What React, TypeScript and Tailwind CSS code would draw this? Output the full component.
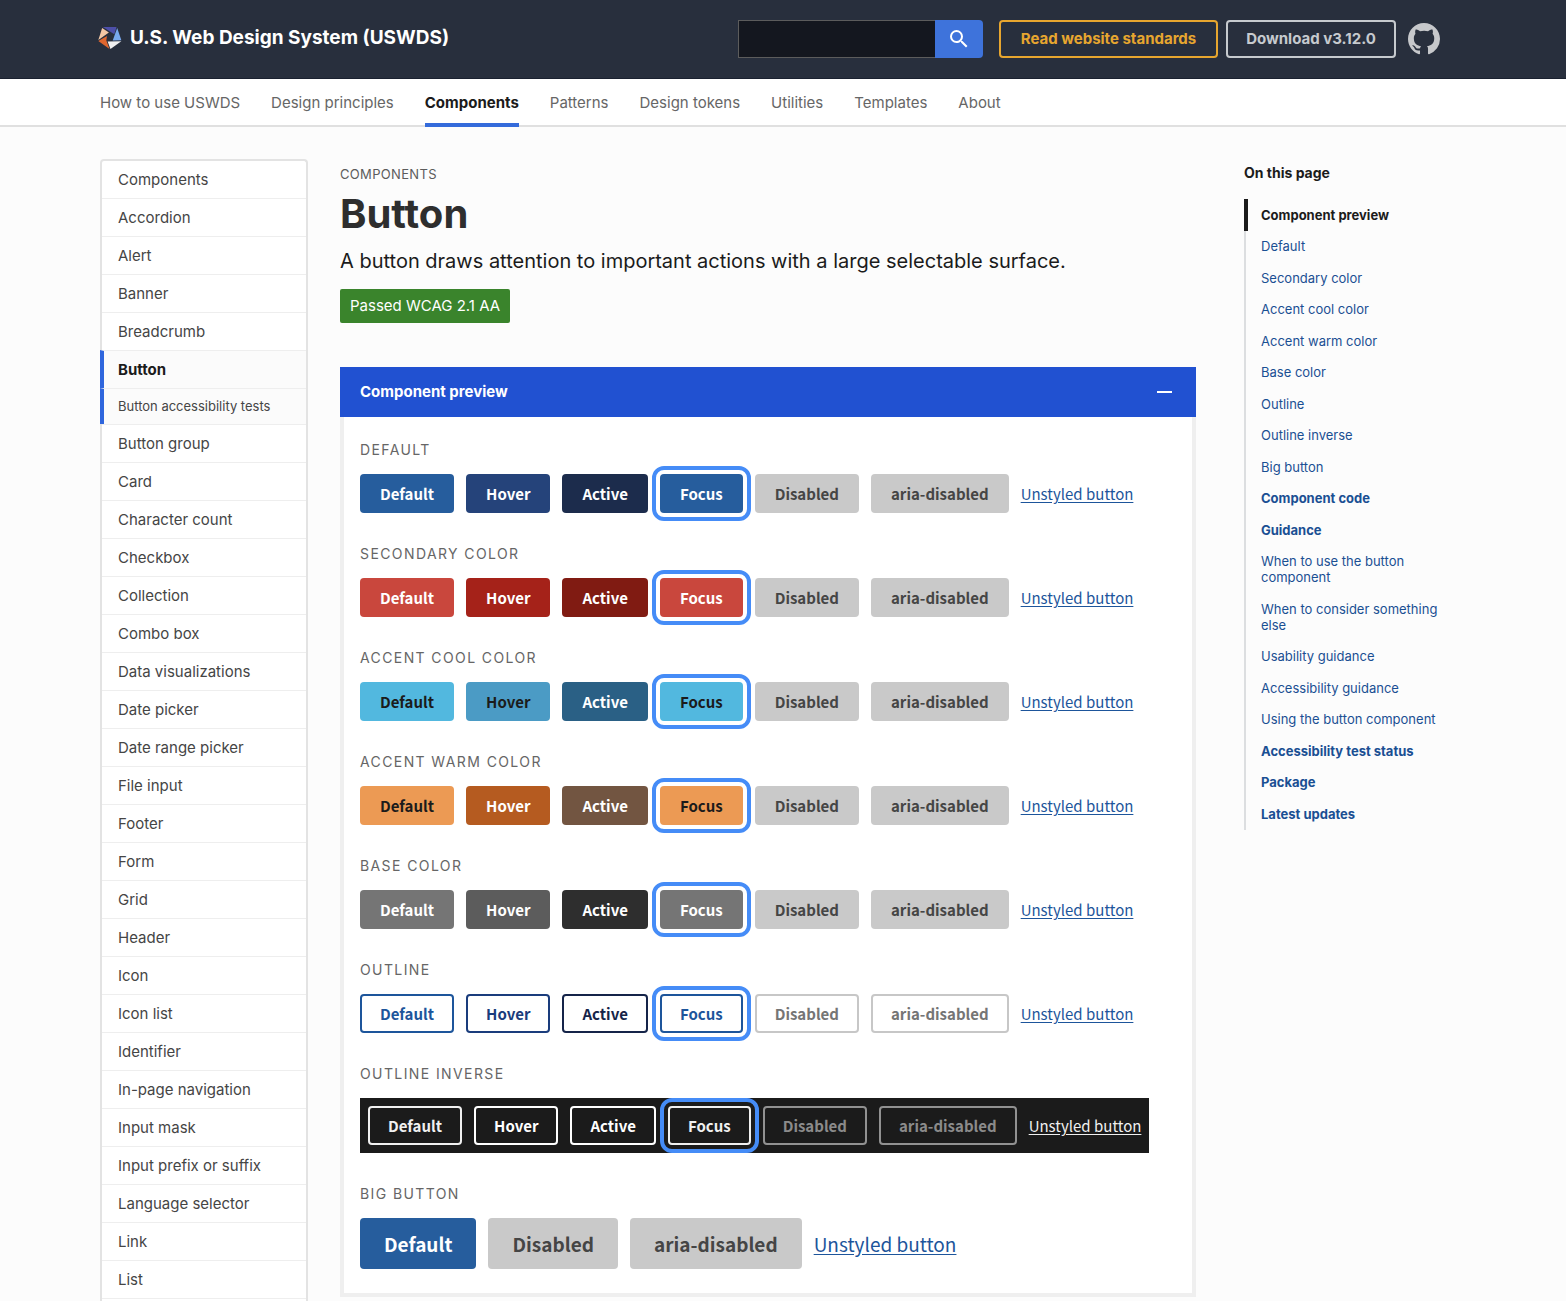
import { MdSearch } from "react-icons/md";

const navItems = [
  "How to use USWDS",
  "Design principles",
  "Components",
  "Patterns",
  "Design tokens",
  "Utilities",
  "Templates",
  "About",
];

const sideItems = [
  "Components",
  "Accordion",
  "Alert",
  "Banner",
  "Breadcrumb",
  "Button",
  "Button accessibility tests",
  "Button group",
  "Card",
  "Character count",
  "Checkbox",
  "Collection",
  "Combo box",
  "Data visualizations",
  "Date picker",
  "Date range picker",
  "File input",
  "Footer",
  "Form",
  "Grid",
  "Header",
  "Icon",
  "Icon list",
  "Identifier",
  "In-page navigation",
  "Input mask",
  "Input prefix or suffix",
  "Language selector",
  "Link",
  "List",
];

const tocItems: { text: string; bold?: boolean }[] = [
  { text: "Default" },
  { text: "Secondary color" },
  { text: "Accent cool color" },
  { text: "Accent warm color" },
  { text: "Base color" },
  { text: "Outline" },
  { text: "Outline inverse" },
  { text: "Big button" },
  { text: "Component code", bold: true },
  { text: "Guidance", bold: true },
  { text: "When to use the button component" },
  { text: "When to consider something else" },
  { text: "Usability guidance" },
  { text: "Accessibility guidance" },
  { text: "Using the button component" },
  { text: "Accessibility test status", bold: true },
  { text: "Package", bold: true },
  { text: "Latest updates", bold: true },
];

const GRAY = "bg-[#c9c9c9] text-[#454545]";

const variants: { label: string; styles: string[]; inverse?: boolean }[] = [
  {
    label: "Default",
    styles: ["bg-[#265d9d] text-white", "bg-[#25437a] text-white", "bg-[#1c2c4c] text-white", "bg-[#265d9d] text-white", GRAY, GRAY],
  },
  {
    label: "Secondary color",
    styles: ["bg-[#c9473d] text-white", "bg-[#a52219] text-white", "bg-[#801b12] text-white", "bg-[#c9473d] text-white", GRAY, GRAY],
  },
  {
    label: "Accent cool color",
    styles: ["bg-[#52b8df] text-[#1b1b1b]", "bg-[#4b9bc5] text-[#1b1b1b]", "bg-[#2a6085] text-white", "bg-[#52b8df] text-[#1b1b1b]", GRAY, GRAY],
  },
  {
    label: "Accent warm color",
    styles: ["bg-[#ec9a54] text-[#1b1b1b]", "bg-[#b55b20] text-white", "bg-[#725541] text-white", "bg-[#ec9a54] text-[#1b1b1b]", GRAY, GRAY],
  },
  {
    label: "Base color",
    styles: ["bg-[#757575] text-white", "bg-[#5c5c5c] text-white", "bg-[#2e2e2e] text-white", "bg-[#757575] text-white", GRAY, GRAY],
  },
  {
    label: "Outline",
    styles: [
      "border-2 border-[#1d559b] text-[#1d559b]",
      "border-2 border-[#1a3c7c] text-[#1a3c7c]",
      "border-2 border-[#152449] text-[#152449]",
      "border-2 border-[#1d559b] text-[#1d559b]",
      "border-2 border-[#c7c7c7] text-[#757575]",
      "border-2 border-[#c7c7c7] text-[#757575]",
    ],
  },
  {
    label: "Outline inverse",
    inverse: true,
    styles: [
      "border-2 border-[#f0f0f0] text-[#f0f0f0]",
      "border-2 border-white text-white",
      "border-2 border-white text-white",
      "border-2 border-[#f0f0f0] text-[#f0f0f0]",
      "border-2 border-[#919191] text-[#8b8b8b]",
      "border-2 border-[#919191] text-[#8b8b8b]",
    ],
  },
];

const states = ["Default", "Hover", "Active", "Focus", "Disabled", "aria-disabled"];

function Logo() {
  return (
    <svg viewBox="52 76 75 70" className="h-6 w-6 shrink-0" aria-hidden="true">
      <polygon points="67,77 110,77 103,99" fill="#4d4fa8" />
      <polygon points="65,80 86,94 53,117" fill="#f3c7a5" />
      <polygon points="53,120 80,105 78,119 88,145" fill="#df662f" />
      <polygon points="82,122 125,121 91,145" fill="#f0f0f0" />
      <polygon points="112,80 125,118 98,119" fill="#78a9ef" />
    </svg>
  );
}

function GithubMark() {
  return (
    <svg viewBox="0 0 16 16" className="size-8" fill="currentColor" aria-hidden="true">
      <path d="M8 0C3.58 0 0 3.58 0 8c0 3.54 2.29 6.53 5.47 7.59.4.07.55-.17.55-.38 0-.19-.01-.82-.01-1.49-2.01.37-2.53-.49-2.69-.94-.09-.23-.48-.94-.82-1.13-.28-.15-.68-.52-.01-.53.63-.01 1.08.58 1.23.82.72 1.21 1.87.87 2.33.66.07-.52.28-.87.51-1.07-1.78-.2-3.64-.89-3.64-3.95 0-.87.31-1.59.82-2.15-.08-.2-.36-1.02.08-2.12 0 0 .67-.21 2.2.82.64-.18 1.32-.27 2-.27.68 0 1.36.09 2 .27 1.53-1.04 2.2-.82 2.2-.82.44 1.1.16 1.92.08 2.12.51.56.82 1.27.82 2.15 0 3.07-1.87 3.75-3.65 3.95.29.25.54.73.54 1.48 0 1.07-.01 1.93-.01 2.2 0 .21.15.46.55.38A8.013 8.013 0 0016 8c0-4.42-3.58-8-8-8z" />
    </svg>
  );
}

function GroupLabel({ children }: { children: string }) {
  return <h3 className="mb-3.5 text-sm leading-5 tracking-widest text-[#666666] uppercase">{children}</h3>;
}

function ButtonRow({ styles, inverse }: { styles: string[]; inverse?: boolean }) {
  return (
    <div className={`flex w-fit items-center gap-3 font-["Noto_Sans_CJK_SC",sans-serif] text-[15px] leading-4 ${inverse ? "bg-[#1b1b1b] p-2" : ""}`}>
      {states.map((state, i) => (
        <button
          key={state}
          type="button"
          disabled={state === "Disabled"}
          aria-disabled={state === "aria-disabled"}
          className={`flex h-[39px] items-center justify-center rounded-sm font-bold whitespace-nowrap ${styles[i].startsWith("border-2") ? "px-[18px]" : "px-5"} ${styles[i]} ${state === "Focus" ? "outline-4 outline-offset-4 outline-[#458cf7]" : ""}`}
        >
          {state}
        </button>
      ))}
      <button type="button" className={`whitespace-nowrap underline underline-offset-2 ${inverse ? "text-[#f0f0f0]" : "text-[#1d559b]"}`}>
        Unstyled button
      </button>
    </div>
  );
}

export default function App() {
  return (
    <div className="min-h-screen bg-[#fcfcfc] font-[Inter,sans-serif] text-[15px] text-[#1b1b1b]">
      <header>
        <div className="border-b border-[#1a2130] bg-[#282f3d] pr-[26px]">
          <div className="mx-auto flex h-[78px] max-w-[1340px] items-center justify-between">
            <a href="#home" className="-ml-0.5 flex items-center gap-2 pb-0.5 text-[19px] leading-6 font-bold whitespace-nowrap text-white">
              <Logo />
              U.S. Web Design System (USWDS)
            </a>
            <div className="flex items-center">
              <form role="search" className="mr-4 flex" onSubmit={(e) => e.preventDefault()}>
                <input
                  type="search"
                  aria-label="Search"
                  className="h-[38px] w-[197px] border border-r-0 border-[#5c5c5c] bg-[#14171f] px-2 text-white"
                />
                <button type="submit" aria-label="Search" className="flex h-[38px] w-12 items-center justify-center rounded-r-sm bg-[#3e73db] text-white">
                  <MdSearch className="size-6" />
                </button>
              </form>
              <a href="#standards" className="mr-2 flex h-[38px] w-[219px] items-center justify-center rounded-sm border-2 border-[#e7a62f] font-bold whitespace-nowrap text-[#e7a62f]">
                Read website standards
              </a>
              <a href="#download" className="mr-3 flex h-[38px] w-[170px] items-center justify-center rounded-sm border-2 border-[#c6cace] font-bold whitespace-nowrap text-[#c6cace]">
                Download v3.12.0
              </a>
              <a href="#github" aria-label="GitHub" className="text-[#c6c8cb]">
                <GithubMark />
              </a>
            </div>
          </div>
        </div>
        <nav aria-label="Primary" className="border-b-2 border-[#e0e0e0] bg-white pr-[26px]">
          <ul className="mx-auto -mb-0.5 flex max-w-[1340px] gap-[31px]">
            {navItems.map((item) => (
              <li key={item}>
                <a
                  href="#nav"
                  className={`block h-12 border-b-4 pt-3.5 leading-5 whitespace-nowrap ${item === "Components" ? "border-[#346bdb] font-bold text-[#1b1b1b]" : "border-transparent text-[#666666]"}`}
                >
                  {item}
                </a>
              </li>
            ))}
          </ul>
        </nav>
      </header>

      <div className="pr-[26px]">
        <div className="mx-auto flex max-w-[1340px] items-start pt-8">
          <nav aria-label="Secondary" className="mr-8 w-52 shrink-0">
            <ul className="rounded-t-sm border-2 border-b-0 border-[#e3e3e3] bg-white">
              {sideItems.map((item) => {
                const current = item === "Button";
                const sub = item === "Button accessibility tests";
                return (
                  <li
                    key={item}
                    className={`border-[#eeeeee] not-first:border-t ${current || sub ? "-ml-0.5 border-l-4 border-l-[#2f66dd] bg-[#fbfbfb] pl-3.5" : "pl-4"}`}
                  >
                    <a
                      href="#component"
                      className={`block ${sub ? "text-[13px] leading-[35px]" : "leading-[37px]"} ${current ? "font-bold text-[#1b1b1b]" : "text-[#454545]"}`}
                    >
                      {item}
                    </a>
                  </li>
                );
              })}
              <li aria-hidden="true" className="border-t border-[#eeeeee] pb-2" />
            </ul>
          </nav>

          <main className="min-w-0 flex-1">
            <p className="mt-[5px] text-[13px] leading-5 tracking-wide text-[#5c5c5c] uppercase">Components</p>
            <h1 className="mt-[5px] text-[40px] leading-[50px] font-bold text-[#2e2e2e]">Button</h1>
            <p className="mt-1.5 text-xl leading-8">A button draws attention to important actions with a large selectable surface.</p>
            <span className="mt-3 inline-block h-[34px] rounded-xs bg-[#3a842c] px-2.5 leading-[34px] text-white">Passed WCAG 2.1 AA</span>

            <section className="mt-11">
              <h2>
                <button type="button" aria-expanded="true" className="flex h-[50px] w-full items-center justify-between bg-[#2151d1] pr-6 pl-5 font-bold text-white">
                  Component preview
                  <span className="h-0.5 w-[15px] bg-white" />
                </button>
              </h2>
              <div className="border-4 border-t-0 border-[#efefef] bg-white px-4 pt-[23px] pb-6">
                {variants.map((v) => (
                  <div key={v.label} className="mb-[31px]">
                    <GroupLabel>{v.label}</GroupLabel>
                    <ButtonRow styles={v.styles} inverse={v.inverse} />
                  </div>
                ))}
                <GroupLabel>Big button</GroupLabel>
                <div className='flex items-center gap-3 font-["Noto_Sans_CJK_SC",sans-serif] text-[19px] leading-5'>
                  <button type="button" className="flex h-[51px] items-center rounded-sm bg-[#265d9d] px-6 font-bold whitespace-nowrap text-white">
                    Default
                  </button>
                  <button type="button" disabled className="flex h-[51px] items-center rounded-sm bg-[#c9c9c9] px-6 font-bold whitespace-nowrap text-[#454545]">
                    Disabled
                  </button>
                  <button type="button" aria-disabled="true" className="flex h-[51px] items-center rounded-sm bg-[#c9c9c9] px-6 font-bold whitespace-nowrap text-[#454545]">
                    aria-disabled
                  </button>
                  <button type="button" className="whitespace-nowrap text-[#1d559b] underline underline-offset-2">
                    Unstyled button
                  </button>
                </div>
              </div>
            </section>
          </main>

          <aside className="ml-12 w-[196px] shrink-0">
            <h2 className="mt-0.5 text-sm leading-6 font-bold">On this page</h2>
            <ul className="mt-3.5 text-[13px] leading-4">
              <li className="border-l-4 border-[#1b1b1b] pl-[13px]">
                <a href="#preview" className="block py-2 font-bold">
                  Component preview
                </a>
              </li>
              {tocItems.map((item) => (
                <li key={item.text} className="border-l-2 border-[#dcdee0] pt-[7px] pb-2 pl-[15px] odd:pt-2">
                  <a href="#section" className={`block text-[#1a4f93] ${item.bold ? "font-bold" : ""}`}>
                    {item.text}
                  </a>
                </li>
              ))}
            </ul>
          </aside>
        </div>
      </div>
    </div>
  );
}
